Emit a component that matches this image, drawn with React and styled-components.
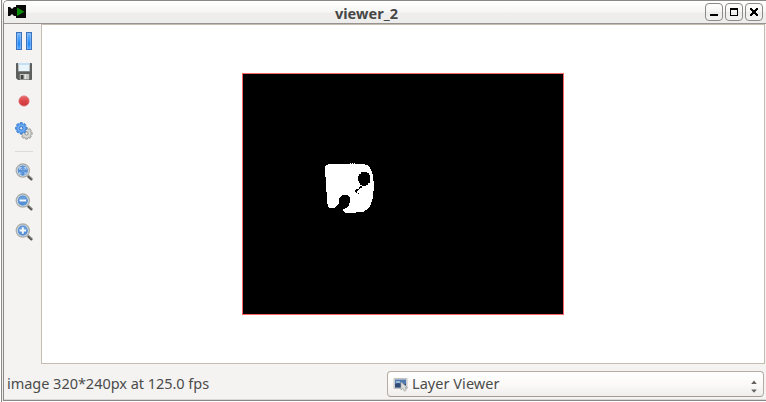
import React from "react";
import styled, { createGlobalStyle } from "styled-components";

const GlobalStyle = createGlobalStyle`
  *, *::before, *::after { box-sizing: border-box; }
  body { margin: 0; background: #fdfdfd; overflow: hidden; }
  svg { display: block; }
`;

const Desktop = styled.div`
  width: 766px;
  height: 402px;
  padding-left: 1px;
  display: flex;
  background: #fff;
  font-family: "Noto Sans", "Open Sans", sans-serif;
  color: #4b4b4b;
`;

const BackgroundEdge = styled.div`
  width: 2px;
  border-left: 1px solid #8b8987;
  background: #f0efee;
`;

const Window = styled.main`
  width: 763px;
  height: 401px;
  display: flex;
  flex-direction: column;
  background: #f4f3f2;
  border: 1px solid #8b8987;
  border-right: 0;
  border-top-left-radius: 5px;
  box-shadow: inset 0 -1px #dad9d7;
`;

const TitleBar = styled.header`
  height: 23px;
  flex: none;
  display: grid;
  grid-template-columns: 60px 1fr 60px;
  background: linear-gradient(#ffffff 0, #f6f6f5 11px, #efeeed 12px, #ededeb 22px);
  border-bottom: 1px solid #999390;
  border-top-left-radius: 4px;
`;

const AppIcon = styled.div`
  padding: 4px 0 0 4px;
`;

const Title = styled.h1`
  margin: 0;
  padding-right: 37px;
  font-size: 14.5px;
  font-weight: 700;
  line-height: 25px;
  text-align: center;
  letter-spacing: 0.05px;
  color: #464646;
`;

const WindowButtons = styled.div`
  display: flex;
  gap: 2px;
  padding-top: 2px;
  margin-left: -1px;
`;

const WindowButton = styled.button`
  width: 18px;
  height: 18px;
  padding: 0;
  flex: none;
  display: grid;
  place-items: center;
  border: 1px solid #8c8a88;
  border-radius: 4px;
  background: linear-gradient(#fff, #f5f5f4 50%, #ededec 51%, #f3f3f2);
`;

const Body = styled.section`
  height: 340px;
  flex: none;
  display: flex;
`;

const Toolbar = styled.nav`
  width: 37px;
  flex: none;
  display: flex;
  flex-direction: column;
  align-items: center;
  padding: 2px 0 0 3px;
`;

const Tool = styled.button`
  width: 30px;
  height: 30px;
  flex: none;
  display: grid;
  place-items: center;
  padding: 0;
  border: 0;
  background: none;
`;

const Separator = styled.div`
  width: 18px;
  height: 11px;
  flex: none;
  display: flex;
  align-items: center;

  &::before {
    content: "";
    width: 18px;
    height: 1px;
    background: #dcdad7;
  }
`;

const Canvas = styled.div`
  width: 724px;
  height: 340px;
  flex: none;
  padding: 48px 0 0 200px;
  background: #fff;
  border: 1px solid #c6bdb1;
`;

const Frame = styled.div`
  width: ${(p) => p.$width + 2}px;
  height: ${(p) => p.$height + 2}px;
  border: 1px solid #ff6464;
  background: #000;
`;

const StatusBar = styled.footer`
  flex: 1;
  display: flex;
  justify-content: space-between;
  padding: 7px 2px 0 3px;
`;

const Status = styled.span`
  font-size: 14.5px;
  line-height: 24px;
  letter-spacing: -0.03px;
  white-space: nowrap;
`;

const Select = styled.button`
  width: 377px;
  height: 26px;
  flex: none;
  display: flex;
  align-items: center;
  padding: 0 6px 0 5px;
  border: 1px solid #b8aca2;
  border-radius: 4px;
  border-bottom-color: #a69c93;
  background: linear-gradient(#fff, #fbfaf9 50%, #f0eeec);
  font: 14.5px/22px "Noto Sans", "Open Sans", sans-serif;
  color: #4b4b4b;
`;

const SelectLabel = styled.span`
  flex: 1;
  padding: 0 0 2px 3px;
  text-align: left;
  letter-spacing: 0.05px;
`;

const Arrows = styled.span`
  padding-top: 4px;
`;

const CameraIcon = () => (
  <svg width="18" height="13" viewBox="0 0 18 13">
    <path d="M0 2h2l2 2 2-2h2V0h10v13H8v-2H6L4 9l-2 2H0z" fill="#090909" />
    <path d="M9 2.6v8.4l7.4-4.2z" fill="#0b8c0b" />
  </svg>
);

const PauseIcon = () => (
  <svg width="18" height="18" viewBox="0 0 18 18">
    <defs>
      <linearGradient id="bar" x1="0" y1="0" x2="0" y2="1">
        <stop offset="0" stopColor="#86bcf8" />
        <stop offset=".45" stopColor="#3d97f8" />
        <stop offset=".7" stopColor="#2088fb" />
        <stop offset="1" stopColor="#5dafff" />
      </linearGradient>
    </defs>
    {[1.5, 11.5].map((x) => (
      <g key={x}>
        <rect x={x} y=".5" width="5" height="17" fill="url(#bar)" stroke="#3b74bd" />
        <path d={`M${x + 1} 1v16M${x + 4} 1v16`} stroke="#8fc3fb" strokeWidth=".6" />
      </g>
    ))}
  </svg>
);

const SaveIcon = () => (
  <svg width="16" height="17" viewBox="0 0 17 17" preserveAspectRatio="none">
    <path d="M.5.5h16v16H2l-1.5-1.5z" fill="#5e5f5d" stroke="#5b5c59" />
    <path d="M2.5 0h12v8h-12z" fill="#eaf4fb" />
    <path d="M2.5 0h12v2h-12z" fill="#c4dff4" />
    <path d="M2 8.5h13" stroke="#83888a" />
    <path d="M4 11h10v5.5H4z" fill="#c5c7c5" />
    <path d="M5 12h3v4H5z" fill="#414341" />
    <path d="M10 11v5" stroke="#ededec" />
  </svg>
);

const RecordIcon = () => (
  <svg width="12" height="12" viewBox="0 0 12 12">
    <defs>
      <linearGradient id="record" x1="0" y1="0" x2="0" y2="1">
        <stop stopColor="#ea7070" />
        <stop offset=".5" stopColor="#dc4448" />
        <stop offset="1" stopColor="#ca3339" />
      </linearGradient>
    </defs>
    <circle cx="6" cy="6" r="5.1" fill="url(#record)" stroke="#dd7073" strokeWidth=".8" />
  </svg>
);

const Gear = ({ x, y, fill, stroke, rim }) => (
  <g transform={`translate(${x} ${y})`}>
    {[0, 45, 90, 135].map((a) => (
      <rect key={a} x="-1.3" y="-5.7" width="2.6" height="11.4" rx=".5"
        transform={`rotate(${a})`} fill={fill} stroke={stroke} strokeWidth=".7" />
    ))}
    <circle r="4.5" fill={fill} />
    <circle r="3.2" fill="none" stroke={rim} strokeWidth=".8" />
    <circle r="1.5" fill="#f2f4f6" stroke={stroke} strokeWidth=".8" />
  </g>
);

const GearsIcon = () => (
  <svg width="18" height="18" viewBox="0 0 18 18">
    <Gear x={11.5} y={11.4} fill="#c8c9c6" stroke="#858783" rim="#e6e6e4" />
    <Gear x={6.2} y={6.2} fill="#4f96ec" stroke="#3878c6" rim="#8cbcf2" />
  </svg>
);

const ZoomIcon = ({ kind }) => (
  <svg width="18" height="18" viewBox="0 0 18 18">
    <path d="M12 12l4.4 4.1" stroke="#a0a29f" strokeWidth="3" strokeLinecap="round" />
    <path d="M13.5 13.8l2.8 2.5" stroke="#555753" strokeWidth="1.8" strokeLinecap="round" />
    <circle cx="7.8" cy="7.6" r="6.6" fill="#d7dfe6" stroke="#a9aeab" strokeWidth="1.3" />
    <circle cx="7.8" cy="7.6" r="5.1" fill="#558fd4" />
    <path d="M3.3 7.2a4.6 4.6 0 0 1 9 0z" fill="#79a9e0" opacity=".6" />
    {kind === "fit" ? (
      <g fill="none" stroke="#b9d5f3" strokeWidth=".9">
        <path d="M4.5 6.5v-2h2M9 4.5h2v2M11 9v2H9M6.5 11h-2V9" />
        <path d="M5 5l2 2M10.7 5l-2 2M10.7 10.5l-2-2M5 10.5l2-2" strokeWidth=".7" />
      </g>
    ) : (
      <path d={kind === "in" ? "M4.5 7.5h6.6M7.8 4.2v6.6" : "M4.5 7.5h6.6"} stroke="#f7fbff" strokeWidth="1.9" />
    )}
  </svg>
);

const BlobImage = () => (
  <svg width="320" height="240" viewBox="243 74 320 240" shapeRendering="crispEdges">
    <path fill="#fff" d="M325 166L326 165L330 164H364L369 166L371 170L373 175V181L374 182V190L373 191V198L371 204L369 208L366 210L363 212H356V213H346L343 211V209L347 208L349 205L350 202V198L348 195H342L340 197L339 199V203L337 206L334 208H329L328 206L327 202L326 182L325 172Z" />
    <path fill="#fff" d="M350 163h1v1h-1zM352 163h1v1h-1zM354 163h1v1h-1z" />
    <path fill="#000" d="M361 172h6v1h2v2h1v8h-2v2h-2v1h-4v-1h-2v-2h-1v-2h-1v-5h1v-2h2z" />
    <path fill="#000" d="M360 186h2v2h-2v1h-1v-2h1zM356 189h3v1h-1v1h-1v2h-1v-1h-1v-2h1zM358 193h1v1h-1z" />
  </svg>
);

const LayerIcon = () => (
  <svg width="16" height="16" viewBox="0 0 16 16">
    <path d="M1 2.5h13v10H1z" fill="#e2e3e1" stroke="#c0c0be" />
    <path d="M2 3.5h11v8H2z" fill="#527ab0" />
    <path d="M2 8.5c4-3 6 1 11-1v4H2z" fill="#304b74" />
    <path d="M3 5h4v2H3z" fill="#9bb8d8" />
    <path d="M8 6v8l2-1.6 1.2 2.8 2.2-.9-1.3-2.6h2.6z" fill="#dededc" stroke="#a5a6a4" strokeWidth=".7" />
  </svg>
);

const SpinIcon = () => (
  <svg width="6" height="13" viewBox="0 0 6 13">
    <path d="M3 .5L5.8 4H.2zM3 12.7L.2 9.5h5.6z" fill="#65615d" />
  </svg>
);

const glyphs = {
  minimize: <path d="M1 8h8" stroke="#000" strokeWidth="2" />,
  maximize: <path fillRule="evenodd" d="M1 1h8v8H1zM2 3v5h6V3z" fill="#000" />,
  close: <path d="M1 1h2v1h1v1h2V2h1V1h2v2H8v1H7v2h1v1h1v2H7V8H6V7H4v1H3v1H1V7h1V6h1V4H2V3H1z" fill="#000" />,
};

const tools = [
  ["Pause", <PauseIcon />],
  ["Save", <SaveIcon />],
  ["Record", <RecordIcon />],
  ["Settings", <GearsIcon />],
];

export default function App() {
  return (
    <>
      <GlobalStyle />
      <Desktop>
        <BackgroundEdge />
        <Window>
          <TitleBar>
            <AppIcon><CameraIcon /></AppIcon>
            <Title>viewer_2</Title>
            <WindowButtons>
              {Object.entries(glyphs).map(([name, glyph]) => (
                <WindowButton key={name} aria-label={name}>
                  <svg width="10" height="10" viewBox="0 0 10 10" shapeRendering="crispEdges">{glyph}</svg>
                </WindowButton>
              ))}
            </WindowButtons>
          </TitleBar>
          <Body>
            <Toolbar>
              {tools.map(([name, icon]) => <Tool key={name} aria-label={name}>{icon}</Tool>)}
              <Separator />
              {["fit", "out", "in"].map((kind) => (
                <Tool key={kind} aria-label={`Zoom ${kind}`}><ZoomIcon kind={kind} /></Tool>
              ))}
            </Toolbar>
            <Canvas>
              <Frame $width={320} $height={240}><BlobImage /></Frame>
            </Canvas>
          </Body>
          <StatusBar>
            <Status>image 320*240px at 125.0 fps</Status>
            <Select>
              <LayerIcon />
              <SelectLabel>Layer Viewer</SelectLabel>
              <Arrows><SpinIcon /></Arrows>
            </Select>
          </StatusBar>
        </Window>
      </Desktop>
    </>
  );
}
